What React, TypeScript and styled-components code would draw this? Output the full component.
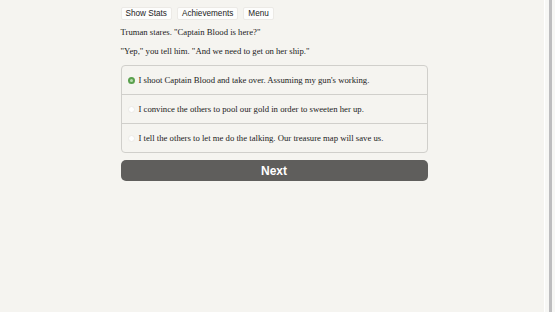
import * as React from 'react'
import styled, { createGlobalStyle } from 'styled-components';

const GlobalStyle = createGlobalStyle`
    html, body {
        margin: 0;
        padding: 0;
        background: #f5f4f0;
    }
    body {
        font-family: "Liberation Serif", "Times New Roman", serif;
    }
`

const choices = [
    "I shoot Captain Blood and take over. Assuming my gun's working.",
    "I convince the others to pool our gold in order to sweeten her up.",
    "I tell the others to let me do the talking. Our treasure map will save us.",
];

export default function App() {
    const [selected, setSelected] = React.useState(0);

    return (
        <>
            <GlobalStyle />
            <Page>
                <Main>
                    <Column>
                        <Toolbar>
                            <ToolBtn>Show Stats</ToolBtn>
                            <ToolBtn>Achievements</ToolBtn>
                            <ToolBtn>Menu</ToolBtn>
                        </Toolbar>
                        <Para>Truman stares. "Captain Blood is here?"</Para>
                        <Para>"Yep," you tell him. "And we need to get on her ship."</Para>
                        <ChoiceBox>
                            {choices.map((c, i) => (
                                <ChoiceRow key={i} onClick={() => setSelected(i)}>
                                    <Radio active={i === selected} />
                                    <span>{c}</span>
                                </ChoiceRow>
                            ))}
                        </ChoiceBox>
                        <NextBtn>Next</NextBtn>
                    </Column>
                </Main>
                <ScrollTrack>
                    <ScrollThumb />
                </ScrollTrack>
            </Page>
        </>
    )
}

const Page = styled.div`
    display: flex;
    height: 312px;
    overflow: hidden;
`

const Main = styled.div`
    flex: 1;
`

const Column = styled.div`
    width: 307px;
    margin: 0 auto;
    padding-top: 7px;
    position: relative;
    left: 2px;
`

const Toolbar = styled.div`
    display: flex;
    gap: 5px;
    margin-bottom: 7px;
`

const ToolBtn = styled.button`
    font-family: "Liberation Sans", Arial, sans-serif;
    font-size: 8.2px;
    color: #222;
    background: #fdfdfc;
    border: 1px solid #eceae6;
    border-radius: 2px;
    padding: 0 4px;
    height: 13px;
    line-height: 11px;
`

const Para = styled.p`
    margin: 0 0 8px;
    font-size: 8.7px;
    line-height: 11px;
    color: #222;
`

const ChoiceBox = styled.div`
    margin-top: 6px;
    border: 1px solid #d0cfcb;
    border-radius: 4px;
    overflow: hidden;
`

const ChoiceRow = styled.div`
    display: flex;
    align-items: center;
    gap: 4px;
    height: 28px;
    padding: 0 6px;
    font-size: 8.7px;
    color: #222;
    & + & {
        border-top: 1px solid #d0cfcb;
    }
`

const Radio = styled.span<{ active: boolean }>`
    box-sizing: border-box;
    width: 7px;
    height: 7px;
    border-radius: 50%;
    background: ${p => p.active ? '#b8ddb0' : '#fff'};
    border: ${p => p.active ? '2px solid #5aa04e' : '1px solid #ecebe7'};
`

const NextBtn = styled.button`
    display: block;
    width: 100%;
    margin-top: 7px;
    height: 21px;
    border: none;
    border-radius: 5px;
    background: #5f5e5c;
    color: #fff;
    font-family: "Liberation Sans", Arial, sans-serif;
    font-weight: bold;
    font-size: 12px;
`

const ScrollTrack = styled.div`
    width: 10px;
    flex-shrink: 0;
    background: #f7f7f5;
    border-left: 1px solid #fff;
    display: flex;
    justify-content: center;
`

const ScrollThumb = styled.div`
    width: 3px;
    background: #bdbdbf;
`
